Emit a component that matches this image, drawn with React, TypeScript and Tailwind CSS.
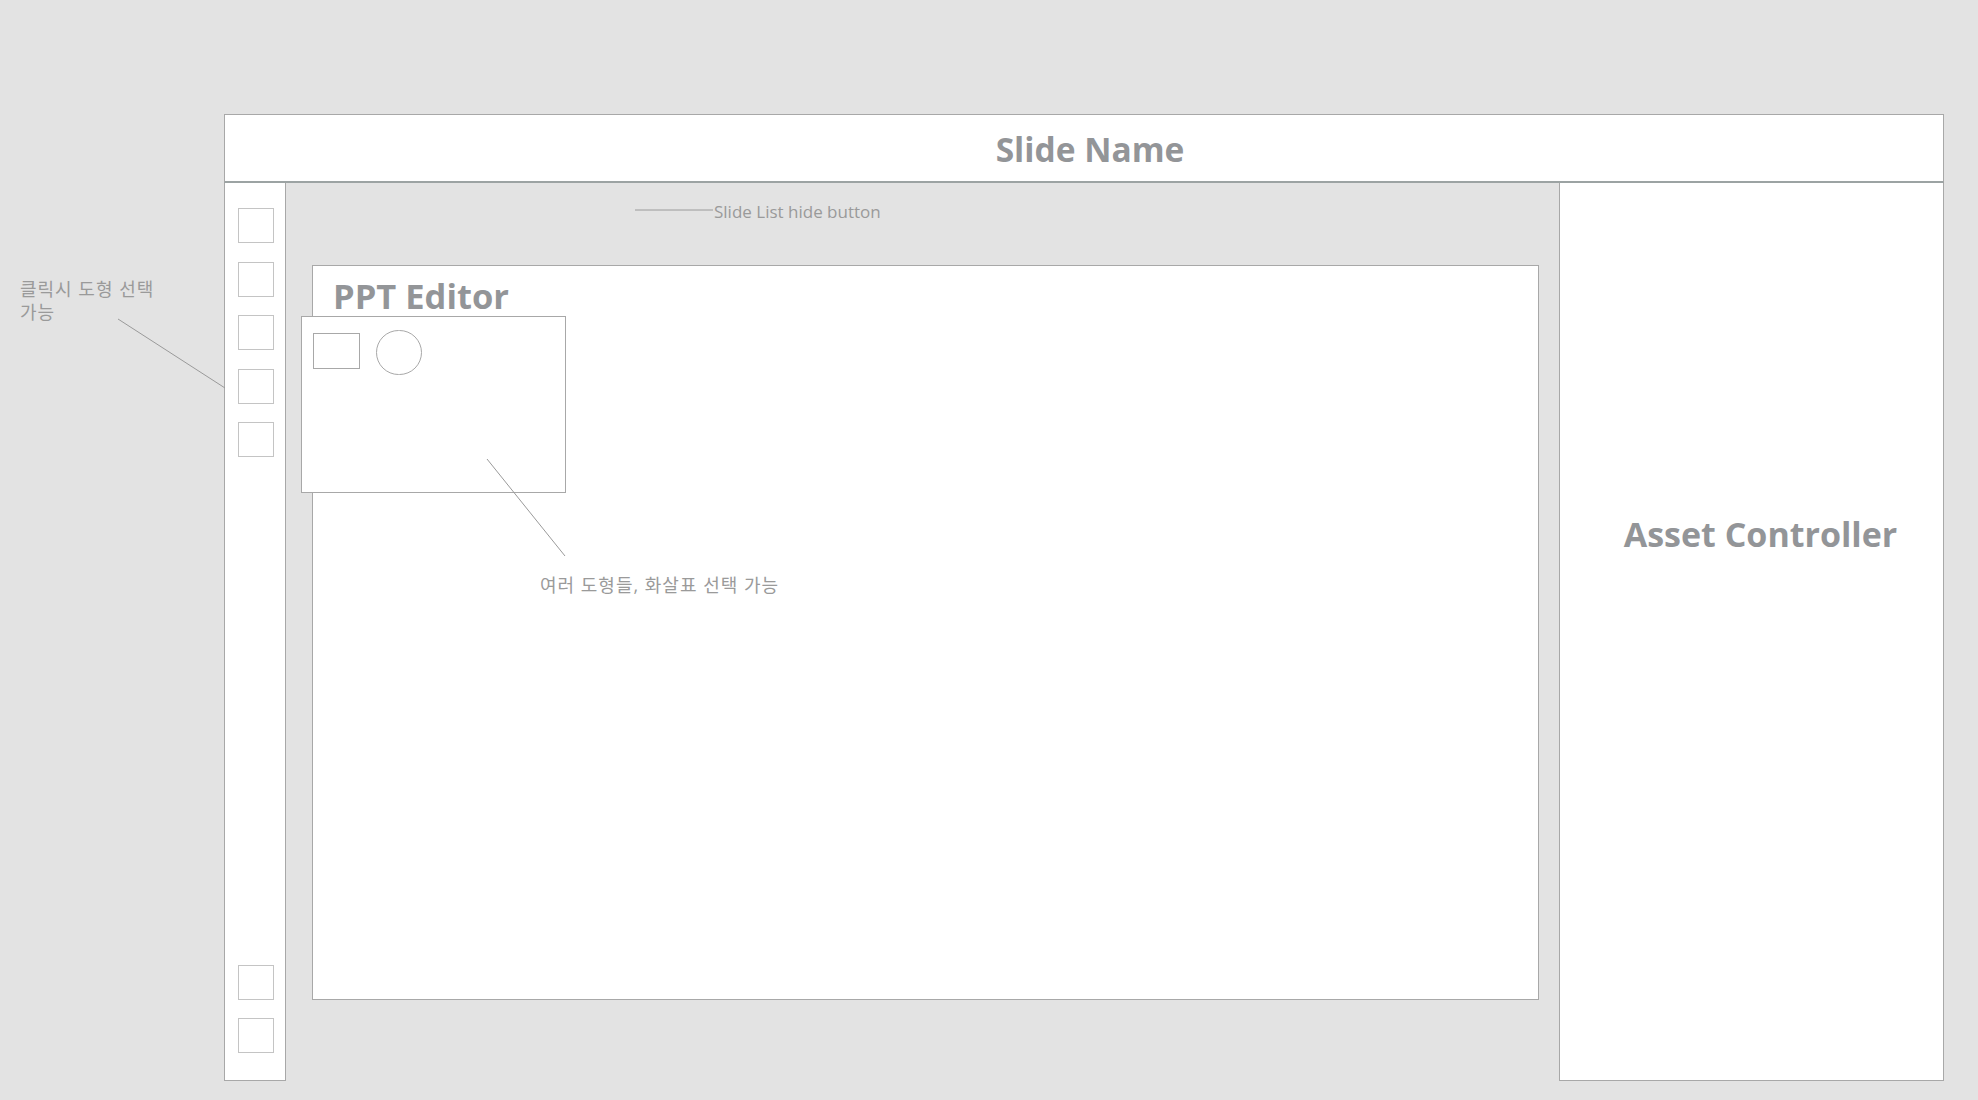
const titleFont = "font-['Segoe_UI','Open_Sans','Noto_Sans',sans-serif]";
const noteFont = "font-['Segoe_UI','Open_Sans','Noto_Sans_CJK_KR',sans-serif]";

function ThumbBox() {
  return <div className="w-[36px] h-[35px] border border-[#c4c4c4] bg-white" />;
}

function Annotations() {
  return (
    <>
      <svg className="absolute left-0 top-0 pointer-events-none" width="1978" height="1100">
        <line x1="118" y1="319" x2="225" y2="388" stroke="#9a9a9a" strokeWidth="1" />
        <line x1="635" y1="210" x2="713" y2="210" stroke="#9a9a9a" strokeWidth="1" />
        <line x1="487" y1="459" x2="565" y2="556" stroke="#9a9a9a" strokeWidth="1" />
      </svg>
      <div className={`absolute left-[20px] top-[278px] w-[170px] text-[18px] leading-[23px] tracking-[1px] text-[#9a9a9a] ${noteFont}`}>
        클릭시 도형 선택
        <br />
        가능
      </div>
      <div className={`absolute left-[714px] top-[202px] text-[17px] leading-[20px] text-[#9a9a9a] ${noteFont}`}>
        Slide List hide button
      </div>
      <div className={`absolute left-[540px] top-[573px] text-[18px] leading-[25px] tracking-[1px] text-[#9a9a9a] ${noteFont}`}>
        여러 도형들, 화살표 선택 가능
      </div>
    </>
  );
}

export default function App() {
  return (
    <div className="relative w-[1978px] h-[1100px] bg-[#e3e3e3] overflow-hidden pt-[114px] pl-[224px]">
      <div className="flex flex-col w-[1720px]">
        {/* Header */}
        <div className="h-[69px] bg-white border border-[#a8a8a8] border-b-2 border-b-[#9ca3a3] flex items-center justify-center pl-[12px] pt-[4px]">
          <span className={`text-[33.5px] font-bold leading-none text-[#939598] ${titleFont}`}>Slide Name</span>
        </div>

        <div className="flex h-[898px]">
          {/* Slide list */}
          <div className="w-[62px] bg-white border-x border-b border-[#a8a8a8] flex flex-col justify-between items-center pl-[2px] pt-[25px] pb-[27px]">
            <div className="flex flex-col gap-[18.5px]">
              <ThumbBox />
              <ThumbBox />
              <ThumbBox />
              <ThumbBox />
              <ThumbBox />
            </div>
            <div className="flex flex-col gap-[18px]">
              <ThumbBox />
              <ThumbBox />
            </div>
          </div>

          {/* Editor area */}
          <div className="flex-1 pl-[26px] pr-[20px] pt-[82px]">
            <div className="relative h-[735px] bg-white border border-[#a8a8a8] pl-[20px] pt-[13px]">
              <div className={`text-[34.5px] font-bold leading-none text-[#939598] ${titleFont}`}>PPT Editor</div>
              {/* Shape picker */}
              <div className="absolute left-[-12px] top-[50px] w-[265px] h-[177px] bg-white border border-[#a8a8a8] flex items-start gap-[16px] pl-[11px] pt-[16px]">
                <div className="w-[47px] h-[36px] border border-[#a8a8a8]" />
                <div className="w-[46px] h-[45px] -mt-[3px] rounded-full border border-[#a8a8a8]" />
              </div>
            </div>
          </div>

          {/* Asset controller */}
          <div className="w-[385px] bg-white border-x border-b border-[#a8a8a8] flex justify-center pl-[18px] pt-[334px]">
            <span className={`text-[34px] font-bold leading-none text-[#939598] ${titleFont}`}>Asset Controller</span>
          </div>
        </div>
      </div>
      <Annotations />
    </div>
  );
}
